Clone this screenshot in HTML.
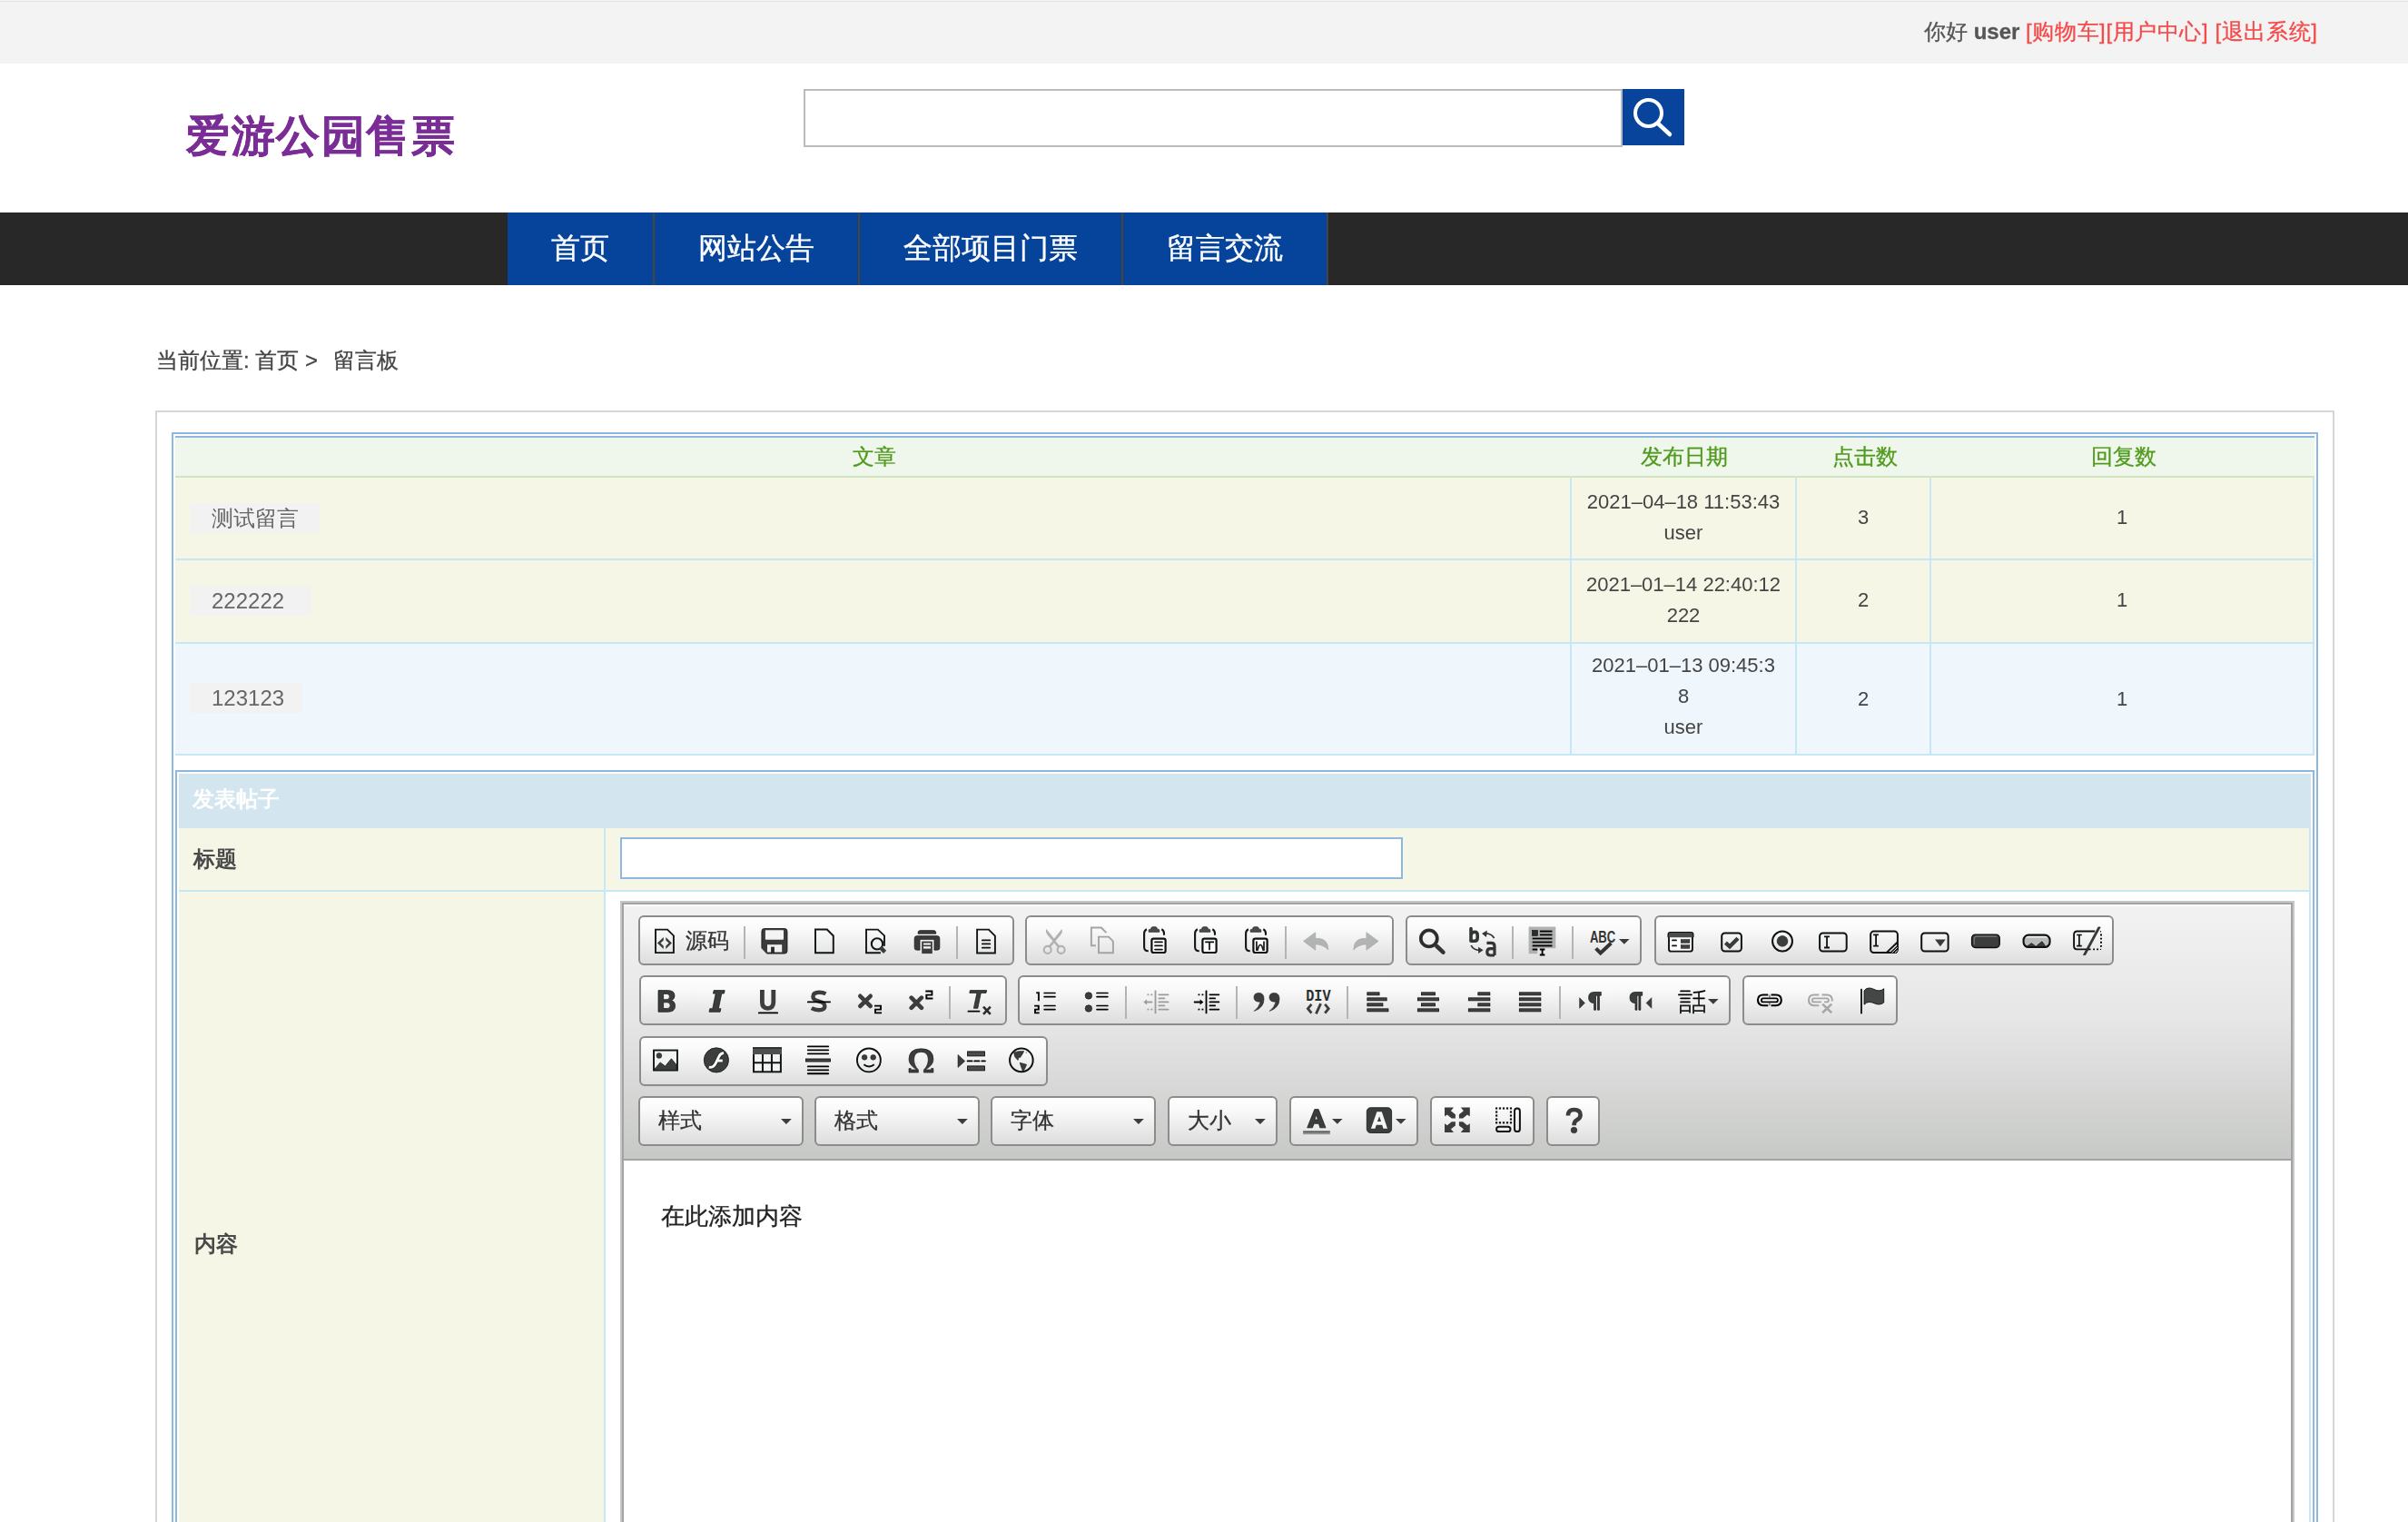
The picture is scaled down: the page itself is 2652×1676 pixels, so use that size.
<!DOCTYPE html>
<html><head><meta charset="utf-8">
<style>
*{margin:0;padding:0;box-sizing:border-box}
html,body{width:2652px;height:1676px;overflow:hidden;background:#fff;font-family:"Liberation Sans",sans-serif}
.a{position:absolute}
.t{position:absolute;white-space:nowrap;line-height:1;will-change:transform}
.cj{-webkit-text-stroke:0.3px currentColor}
#top{left:0;top:0;width:2652px;height:70px;background:#f3f3f3;border-top:2px solid #f3f3f3}
#top:before{content:"";position:absolute;left:0;top:-1px;width:100%;height:1px;background:#e3e3e3}
#nav{left:0;top:234px;width:2652px;height:80px;background:#282828}
.ni{will-change:transform;-webkit-text-stroke:0.35px #fff;position:absolute;top:0;height:80px;background:#06449b;border-right:2px solid #4b4538;color:#fff;font-size:32px;line-height:78px;text-align:center}
.box{left:171px;top:452px;width:2400px;height:1300px;border:2px solid #d6d6d6}
.lb{will-change:transform;position:absolute;background:#f2f2f2;color:#666;font-size:24px;line-height:33px;height:33px;padding-left:24px}
.hd{color:#4f9a1c;font-size:24px}
.dt{color:#444;font-size:22px;text-align:center;line-height:34px}
.grp{position:absolute;border:2px solid #8c8c8c;border-radius:6px;background:linear-gradient(#fefefe,#fafafa 25%,#dddddd)}
.sep{position:absolute;width:2px;background:#b4b4b4}
.ic{position:absolute;overflow:visible}
</style></head><body>
<div id="top" class="a"></div>
<div class="t cj" style="left:2119px;top:23px;font-size:24px;color:#555">你好 <b>user</b> <span style="color:#f44a4a;letter-spacing:0.6px">[购物车][用户中心] [退出系统]</span></div>

<div class="t" style="left:205px;top:126px;font-size:48px;font-weight:bold;color:#7a2d96;letter-spacing:1.6px;-webkit-text-stroke:0.3px #7a2d96">爱游公园售票</div>
<div class="a" style="left:885px;top:98px;width:902px;height:64px;border:2px solid #bbb;background:#fff"></div>
<div class="a" style="left:1787px;top:98px;width:68px;height:62px;background:#08449b">
<svg width="68" height="62" viewBox="0 0 68 62"><circle cx="28.5" cy="26.5" r="14.5" fill="none" stroke="#fff" stroke-width="4"/><line x1="39" y1="38" x2="52" y2="50" stroke="#fff" stroke-width="4.5" stroke-linecap="round"/></svg>
</div>

<div id="nav" class="a">
<div class="ni" style="left:559px;width:162px">首页</div>
<div class="ni" style="left:721px;width:226px">网站公告</div>
<div class="ni" style="left:947px;width:290px">全部项目门票</div>
<div class="ni" style="left:1237px;width:226px;border-right-color:#444">留言交流</div>
</div>

<div class="t cj" style="left:172px;top:385px;font-size:24px;color:#444">当前位置: 首页 &gt;&nbsp;<span style="margin-left:10px">留言板</span></div>

<div class="a box"></div>
<!-- listing table -->
<div class="a" style="left:189px;top:476px;width:2364px;height:1300px;border:2px solid #8db8e0"></div>
<div class="a" style="left:193px;top:480px;width:2356px;height:2px;background:#8db8e0"></div>
<div class="a" style="left:193px;top:482px;width:2356px;height:42px;background:#eff6eb"></div>
<div class="a" style="left:193px;top:524px;width:2356px;height:2px;background:#d0e6c2"></div>
<div class="t hd cj" style="left:939px;top:491px">文章</div>
<div class="t hd cj" style="left:1807px;top:491px">发布日期</div>
<div class="t hd cj" style="left:2018px;top:491px">点击数</div>
<div class="t hd cj" style="left:2303px;top:491px">回复数</div>

<div class="a" style="left:193px;top:526px;width:2356px;height:89px;background:#f6f6e6"></div>
<div class="a" style="left:193px;top:615px;width:2356px;height:2px;background:#c6e7f4"></div>
<div class="a" style="left:193px;top:617px;width:2356px;height:90px;background:#f6f6e6"></div>
<div class="a" style="left:193px;top:707px;width:2356px;height:2px;background:#c6e7f4"></div>
<div class="a" style="left:193px;top:709px;width:2356px;height:121px;background:#f0f7fc"></div>
<div class="a" style="left:193px;top:830px;width:2356px;height:2px;background:#c6e7f4"></div>
<div class="a" style="left:1729px;top:526px;width:2px;height:304px;background:#c6e7f4"></div>
<div class="a" style="left:1977px;top:526px;width:2px;height:304px;background:#c6e7f4"></div>
<div class="a" style="left:2125px;top:526px;width:2px;height:304px;background:#c6e7f4"></div>
<div class="a" style="left:2547px;top:526px;width:2px;height:304px;background:#c6e7f4"></div>

<div class="lb" style="left:209px;top:554px;width:143px">测试留言</div>
<div class="lb" style="left:209px;top:645px;width:134px">222222</div>
<div class="lb" style="left:209px;top:752px;width:124px">123123</div>

<div class="t dt" style="left:1731px;top:535.5px;width:246px">2021–04–18 11:53:43<br>user</div>
<div class="t dt" style="left:1731px;top:626.5px;width:246px">2021–01–14 22:40:12<br>222</div>
<div class="t dt" style="left:1731px;top:716px;width:246px">2021–01–13 09:45:3<br>8<br>user</div>
<div class="t dt" style="left:1979px;top:553px;width:146px">3</div>
<div class="t dt" style="left:1979px;top:644px;width:146px">2</div>
<div class="t dt" style="left:1979px;top:753px;width:146px">2</div>
<div class="t dt" style="left:2127px;top:553px;width:420px">1</div>
<div class="t dt" style="left:2127px;top:644px;width:420px">1</div>
<div class="t dt" style="left:2127px;top:753px;width:420px">1</div>

<!-- form table -->
<div class="a" style="left:193px;top:848px;width:2356px;height:1000px;border:2px solid #8db8e0"></div>
<div class="a" style="left:197px;top:852px;width:2348px;height:60px;background:#d3e6f0"></div>
<div class="t" style="left:212px;top:868px;font-size:24px;font-weight:bold;color:#fff">发表帖子</div>
<div class="a" style="left:197px;top:912px;width:2348px;height:68px;background:#f6f6e6"></div>
<div class="a" style="left:197px;top:980px;width:2348px;height:2px;background:#c6e7f4"></div>
<div class="a" style="left:197px;top:982px;width:468px;height:800px;background:#f6f6e6"></div>
<div class="a" style="left:665px;top:912px;width:2px;height:900px;background:#c6e7f4"></div>
<div class="a" style="left:2543px;top:912px;width:2px;height:900px;background:#c6e7f4"></div>
<div class="t" style="left:213px;top:934px;font-size:24px;font-weight:bold;color:#4a4a4a">标题</div>
<div class="t" style="left:214px;top:1358px;font-size:24px;font-weight:bold;color:#4a4a4a">内容</div>
<div class="a" style="left:683px;top:922px;width:862px;height:46px;border:2px solid #8fb8e0;background:#fff"></div>

<!-- editor -->
<div id="ed" class="a" style="left:683px;top:992px;width:1844px;height:700px;border:2px solid #c6c6c6">
 <div class="a" style="left:0;top:0;width:1840px;height:696px;border:2px solid #a3a3a3;background:#fff"></div>
 <div class="a" style="left:2px;top:2px;width:1836px;height:280px;background:linear-gradient(#f2f2f2,#e6e6e6 45%,#c7c9c6);border-top:2px solid #fdfdfd"></div>
 <div class="a" style="left:2px;top:282px;width:1836px;height:2px;background:#a3a3a3"></div>
</div>
<div class="grp" style="left:703px;top:1008px;width:414px;height:55px"></div>
<svg class="ic" style="left:716.0px;top:1019.5px" width="32" height="32" viewBox="0 0 32 32"><path d="M6 3.6H19L25.9 10.4V29.1H6Z" fill="none" stroke="#111616" stroke-width="1.9"/><path d="M7.9 18.6L14.8 12V15.5L11.5 18.6L14.8 21.8V25.1Z M23.9 18.6L17.3 12V15.5L20.6 18.6L17.3 21.8V25.1Z" fill="#3a3b3b"/></svg>
<div class="t cj" style="left:755px;top:1024px;font-size:24px;color:#333">源码</div>
<div class="sep" style="left:819px;top:1020px;height:36px"></div>
<svg class="ic" style="left:837.0px;top:1019.5px" width="32" height="32" viewBox="0 0 32 32"><path d="M5 2.5H27Q30 2.5 30 5.5V27.1Q30 30.1 27 30.1H7.6L1.9 24.1V5.5Q1.9 2.5 5 2.5Z" fill="#3a3b3b"/><path d="M5 2.5H27Q30 2.5 30 5.5V27.1Q30 30.1 27 30.1H7.6L1.9 24.1V5.5Q1.9 2.5 5 2.5Z" fill="none" stroke="#111" stroke-width="0.8"/><rect x="5.9" y="4.2" width="20.1" height="10.6" rx="0.8" fill="#f4f4f4"/><rect x="8" y="20.2" width="16.2" height="8.3" fill="#f0f0f0"/><rect x="12.1" y="22.7" width="3.8" height="7" fill="#2a2b2b"/></svg>
<svg class="ic" style="left:892.0px;top:1019.5px" width="32" height="32" viewBox="0 0 32 32"><path d="M6 3.5H18.8L25.8 10.5V29.2H6Z" fill="none" stroke="#111616" stroke-width="1.95"/></svg>
<svg class="ic" style="left:948.0px;top:1019.5px" width="32" height="32" viewBox="0 0 32 32"><path d="M26 21.8V10.4L18.8 3.6H6V29.2H21.9" fill="none" stroke="#111616" stroke-width="1.9"/><circle cx="18" cy="19.4" r="7.2" fill="#f0f0f0"/><circle cx="18" cy="19.4" r="6.15" fill="none" stroke="#111616" stroke-width="2.1"/><path d="M21.6 23.3L26.6 28.4" stroke="#3a3b3b" stroke-width="4.4"/></svg>
<svg class="ic" style="left:1005.0px;top:1019.5px" width="32" height="32" viewBox="0 0 32 32"><path d="M6 8.3V7.2Q6 4.6 8.6 4.6H23.2Q25.8 4.6 25.8 7.2V8.3Z" fill="#3a3b3b" stroke="#111" stroke-width="0.6"/><path d="M5 10.6H27Q29.9 10.6 29.9 13.5V23.6Q29.9 26.2 27.3 26.2H23.9V14.4H8.1V26.2H4.7Q2.1 26.2 2.1 23.6V13.5Q2.1 10.6 5 10.6Z" fill="#3a3b3b" stroke="#111" stroke-width="0.6"/><rect x="10.2" y="16.6" width="11.6" height="13.5" fill="#3a3b3b"/><rect x="12" y="18.5" width="8" height="2" fill="#f4f4f4"/><rect x="12" y="22.2" width="8" height="2.4" fill="#f4f4f4"/></svg>
<div class="sep" style="left:1053px;top:1020px;height:36px"></div>
<svg class="ic" style="left:1070.0px;top:1019.5px" width="32" height="32" viewBox="0 0 32 32"><path d="M6.1 3.6H18.9L25.9 10.6V29.5H6.1Z" fill="none" stroke="#111616" stroke-width="1.9"/><path d="M11.8 15.45H20.3 M11.8 19.45H20.3 M11.8 23.55H20.3" stroke="#111" stroke-width="1.7" stroke-linecap="round"/></svg>
<div class="grp" style="left:1129px;top:1008px;width:406px;height:55px"></div>
<svg class="ic" style="left:1145.0px;top:1019.5px" width="32" height="32" viewBox="0 0 32 32"><path d="M7.4 3Q5.8 6 9 10L14.6 16.6H17.2L22.8 10Q26 6 24.4 3L15.9 13.4Z" fill="#b0b2b2"/><path d="M10.6 22.6L15.9 16.4L21.2 22.6" fill="none" stroke="#b0b2b2" stroke-width="2.6"/><circle cx="8.7" cy="25.9" r="4" fill="none" stroke="#b0b2b2" stroke-width="2.1"/><circle cx="23.6" cy="25.9" r="4" fill="none" stroke="#b0b2b2" stroke-width="2.1"/></svg>
<svg class="ic" style="left:1198.0px;top:1019.5px" width="32" height="32" viewBox="0 0 32 32"><path d="M8.8 21.2H3.9V1.5H14.9L20.4 7.2 M12 29.2V11.6H23L27.9 16.6V29.2Z" fill="none" stroke="#a2a4a4" stroke-width="1.9"/></svg>
<svg class="ic" style="left:1256.0px;top:1019.5px" width="32" height="32" viewBox="0 0 32 32"><path d="M6.9 3.3Q4.1 4.5 4.1 8V23Q4.1 27.3 8.8 27.3 M23.3 3.3Q26 4.5 26 8V9.8" fill="none" stroke="#111616" stroke-width="2.1"/><path d="M9.2 6.3V4.2Q9.2 3.4 10.2 3.4H11.3L12.2 1.3Q12.5 0.7 13.3 0.7H16.7Q17.5 0.7 17.8 1.3L18.7 3.4H19.8Q20.8 3.4 20.8 4.2V6.3Z" fill="#4a4b4b" stroke="#1a1a1a" stroke-width="0.7"/><rect x="12.4" y="13.6" width="15.2" height="15.4" rx="2" fill="#fff" stroke="#0d1111" stroke-width="2.2"/><path d="M16 17.45H24 M16 21.4H24 M16 25.55H24" stroke="#111" stroke-width="1.7" stroke-linecap="round"/></svg>
<svg class="ic" style="left:1312.0px;top:1019.5px" width="32" height="32" viewBox="0 0 32 32"><path d="M6.9 3.3Q4.1 4.5 4.1 8V23Q4.1 27.3 8.8 27.3 M23.3 3.3Q26 4.5 26 8V9.8" fill="none" stroke="#111616" stroke-width="2.1"/><path d="M9.2 6.3V4.2Q9.2 3.4 10.2 3.4H11.3L12.2 1.3Q12.5 0.7 13.3 0.7H16.7Q17.5 0.7 17.8 1.3L18.7 3.4H19.8Q20.8 3.4 20.8 4.2V6.3Z" fill="#4a4b4b" stroke="#1a1a1a" stroke-width="0.7"/><rect x="12.4" y="13.6" width="15.2" height="15.4" rx="2" fill="#fff" stroke="#0d1111" stroke-width="2.2"/><path d="M15.2 17.45H25 M20 17.45V26.2" stroke="#111" stroke-width="1.7"/></svg>
<svg class="ic" style="left:1368.0px;top:1019.5px" width="32" height="32" viewBox="0 0 32 32"><path d="M6.9 3.3Q4.1 4.5 4.1 8V23Q4.1 27.3 8.8 27.3 M23.3 3.3Q26 4.5 26 8V9.8" fill="none" stroke="#111616" stroke-width="2.1"/><path d="M9.2 6.3V4.2Q9.2 3.4 10.2 3.4H11.3L12.2 1.3Q12.5 0.7 13.3 0.7H16.7Q17.5 0.7 17.8 1.3L18.7 3.4H19.8Q20.8 3.4 20.8 4.2V6.3Z" fill="#4a4b4b" stroke="#1a1a1a" stroke-width="0.7"/><rect x="12.4" y="13.6" width="15.2" height="15.4" rx="2" fill="#fff" stroke="#0d1111" stroke-width="2.2"/><path d="M15.9 16.6V26.2H17Q18.5 20.4 20.1 20.4Q21.7 20.4 23.2 26.2H24V16.6" fill="none" stroke="#222" stroke-width="1.8"/></svg>
<div class="sep" style="left:1415px;top:1020px;height:36px"></div>
<svg class="ic" style="left:1433.0px;top:1019.5px" width="32" height="32" viewBox="0 0 32 32"><path d="M2.6 16.4L15.7 6.7V13.5H19.4Q29.5 14 29.8 26Q25 20.5 16.5 19.8H15.7V26.2Z" fill="#b2b4b4" stroke="#a0a2a2" stroke-width="0.6"/></svg>
<svg class="ic" style="left:1489.0px;top:1019.5px" width="32" height="32" viewBox="0 0 32 32"><path d="M29 16.4L15.9 6.7V13.5H12.2Q2.1 14 1.8 26Q6.6 20.5 15.1 19.8H15.9V26.2Z" fill="#b2b4b4" stroke="#a0a2a2" stroke-width="0.6"/></svg>
<div class="grp" style="left:1548px;top:1008px;width:260px;height:55px"></div>
<svg class="ic" style="left:1561.0px;top:1019.5px" width="32" height="32" viewBox="0 0 32 32"><circle cx="12.8" cy="13.4" r="9" fill="none" stroke="#333434" stroke-width="3.8"/><circle cx="12.8" cy="13.4" r="9" fill="none" stroke="#111" stroke-width="0.5"/><path d="M21.4 22L28.4 28.6" stroke="#333434" stroke-width="4.6" stroke-linecap="round"/></svg>
<svg class="ic" style="left:1617.0px;top:1019.5px" width="32" height="32" viewBox="0 0 32 32"><path d="M3 2.5V16.2 M3 9.6Q3.6 6.3 7.4 6.3Q10.2 6.3 10.2 10V12.4Q10.2 16.2 7 16.2H3" fill="none" stroke="#333434" stroke-width="3.6" stroke-linecap="round"/><path d="M20.4 18.4H25.4Q29 18.4 29 22.2V32 M29 24.6H24.4Q20.8 24.6 20.8 28.2Q20.8 32 24.4 32H29" fill="none" stroke="#333434" stroke-width="3.2"/><path d="M28.5 13.1Q26.5 8.3 18.5 7.6" fill="none" stroke="#333434" stroke-width="1.8"/><path d="M15 7.9L20.9 4.6L20 12.1Z" fill="#333434"/><path d="M3.2 21Q5.5 26.2 12.5 26.4" fill="none" stroke="#333434" stroke-width="1.8"/><path d="M16.5 26.2L11.1 22.7V30.1Z" fill="#333434"/></svg>
<div class="sep" style="left:1665px;top:1020px;height:36px"></div>
<svg class="ic" style="left:1681.5px;top:1019.5px" width="32" height="32" viewBox="0 0 32 32"><path d="M1.6 0.6H31.3V24.3H11.3V30.2H1.6Z" fill="#b0b2b2"/><rect x="5.65" y="4.6" width="5.65" height="5.7" fill="#2a2b2b" stroke="#000" stroke-width="0.6"/><rect x="13.8" y="4.6" width="13.7" height="1.9" fill="#000"/><rect x="13.8" y="8.5" width="13.7" height="1.8" fill="#000"/><rect x="5.65" y="12.6" width="21.85" height="1.8" fill="#000"/><rect x="5.65" y="16.6" width="21.85" height="1.8" fill="#000"/><rect x="5.65" y="20.5" width="21.85" height="1.9" fill="#000"/><rect x="5.65" y="24.6" width="5.65" height="1.9" fill="#000"/><path d="M13.8 25.5H19.4 M16.6 25.5V31.5 M13.8 31.5H19.4" stroke="#000" stroke-width="1.9"/></svg>
<div class="sep" style="left:1731px;top:1020px;height:36px"></div>
<svg class="ic" style="left:1748.0px;top:1019.5px" width="32" height="32" viewBox="0 0 32 32"><text x="2.9" y="18.4" font-family="Liberation Sans" font-weight="bold" font-size="18.9" fill="#333434" textLength="28.3" lengthAdjust="spacingAndGlyphs">ABC</text><path d="M9.6 24.3L14.7 29.4L26.4 18.5" fill="none" stroke="#333434" stroke-width="4"/></svg>
<svg class="ic" style="left:1783.0px;top:1034.1px" width="11.6" height="5.8" viewBox="0 0 11.6 5.8"><path d="M0 0H11.6L5.8 5.8Z" fill="#3c3c3c"/></svg>
<div class="grp" style="left:1822px;top:1008px;width:506px;height:55px"></div>
<svg class="ic" style="left:1835.0px;top:1019.5px" width="32" height="32" viewBox="0 0 32 32"><rect x="3" y="7.4" width="25.9" height="20.2" rx="2.4" fill="#fff" stroke="#0d1111" stroke-width="1.9"/><path d="M2.1 12.3V9Q2.1 6.5 4.6 6.5H27.4Q29.9 6.5 29.9 9V12.3Z" fill="#4a4b4b"/><path d="M2.1 12.3V9Q2.1 6.5 4.6 6.5H27.4Q29.9 6.5 29.9 9V12.3" fill="none" stroke="#0d1111" stroke-width="1.2"/><path d="M6.9 15.4H11.1 M6.9 21.4H11.1" stroke="#111" stroke-width="1.7" stroke-linecap="round"/><rect x="16.2" y="14.6" width="9.7" height="3.7" fill="#3f4040" stroke="#111" stroke-width="0.5"/><rect x="16.2" y="20.6" width="9.7" height="3.7" fill="#3f4040" stroke="#111" stroke-width="0.5"/></svg>
<svg class="ic" style="left:1891.0px;top:1019.5px" width="32" height="32" viewBox="0 0 32 32"><rect x="5.2" y="7.5" width="21.7" height="20" rx="3.5" fill="none" stroke="#0d1111" stroke-width="2"/><path d="M9.4 18.1L14 22.3L23 13.3" fill="none" stroke="#3a3b3b" stroke-width="4.4"/></svg>
<svg class="ic" style="left:1947.0px;top:1019.5px" width="32" height="32" viewBox="0 0 32 32"><circle cx="16" cy="16.45" r="10.95" fill="none" stroke="#0d1111" stroke-width="2"/><circle cx="16" cy="16.4" r="5.9" fill="#3c3d3d" stroke="#111" stroke-width="0.5"/></svg>
<svg class="ic" style="left:2003.0px;top:1019.5px" width="32" height="32" viewBox="0 0 32 32"><rect x="1.1" y="7.5" width="29.6" height="20" rx="3.5" fill="none" stroke="#0d1111" stroke-width="2"/><path d="M6 11.45H12 M9.05 11.45V23.5 M6 23.5H12" stroke="#0d1111" stroke-width="1.8"/></svg>
<svg class="ic" style="left:2059.0px;top:1019.5px" width="32" height="32" viewBox="0 0 32 32"><rect x="1.15" y="5.6" width="29.75" height="23.5" rx="3.5" fill="none" stroke="#0d1111" stroke-width="2"/><path d="M4.1 9.35H9.9 M7.1 9.35V21.6 M4.1 21.6H9.9" stroke="#0d1111" stroke-width="1.8"/><path d="M18.6 29.1L30.5 17.7" stroke="#111" stroke-width="2"/><path d="M21.6 29.6L31.2 20.4V26.2Q31.2 30.1 27.4 30.1H21.2Z" fill="#111"/><path d="M24.6 29.2L30.6 23.4 M27.8 29.4L30.8 26.6" stroke="#f2f2f2" stroke-width="1"/></svg>
<svg class="ic" style="left:2115.0px;top:1019.5px" width="32" height="32" viewBox="0 0 32 32"><rect x="1.2" y="7.5" width="29.4" height="20" rx="3.5" fill="none" stroke="#0d1111" stroke-width="2"/><path d="M16 14.6H27.8L21.9 22.2Z" fill="#3a3b3b"/></svg>
<svg class="ic" style="left:2171.0px;top:1019.5px" width="32" height="32" viewBox="0 0 32 32"><rect x="0.6" y="9.1" width="30.6" height="14.4" rx="4" fill="#3c3d3d" stroke="#0d0d0d" stroke-width="1.4"/><path d="M3.2 20.2V14.2Q3.2 11.2 6.4 11.2H28.2" fill="none" stroke="#7a7b7b" stroke-width="1.2"/></svg>
<svg class="ic" style="left:2227.0px;top:1019.5px" width="32" height="32" viewBox="0 0 32 32"><rect x="1.6" y="9.6" width="28.9" height="13.4" rx="5.5" fill="#f4f4f4"/><path d="M2.8 12.5H29.4V18Q29.4 21.8 25.6 21.8H6.6Q2.8 21.8 2.8 18Z" fill="#b9baba"/><path d="M4.9 22.5L10.3 18.7L15.2 22.2L21.9 16.8L26 22.5Z" fill="#3a3b3b" stroke="#111" stroke-width="0.8"/><rect x="1.6" y="9.6" width="28.9" height="13.4" rx="5.5" fill="none" stroke="#0d1111" stroke-width="2.2"/></svg>
<svg class="ic" style="left:2283.0px;top:1019.5px" width="32" height="32" viewBox="0 0 32 32"><path d="M24.2 5.5H4.6Q1.1 5.5 1.1 9V21.8Q1.1 25.4 4.6 25.4H19.6" fill="none" stroke="#0d1111" stroke-width="1.9"/><path d="M4.15 9.5H9.8 M6.9 9.5V21.6 M4.15 21.6H9.8" stroke="#0d1111" stroke-width="1.7"/><path d="M27.8 0.9H30.2L13.8 31.6H11.4Z" fill="#3a3b3b" stroke="#111" stroke-width="0.6"/><path d="M31 8.6V24" stroke="#000" stroke-width="1.9" stroke-dasharray="1.9 2.2"/><path d="M22.2 25.45H29.5" stroke="#000" stroke-width="1.8" stroke-dasharray="1.8 2.2"/><circle cx="30.5" cy="5.8" r="0.7" fill="#000"/><circle cx="30.5" cy="25.4" r="0.7" fill="#000"/></svg>
<div class="grp" style="left:704px;top:1074px;width:405px;height:55px"></div>
<svg class="ic" style="left:718.4px;top:1085.5px" width="32" height="32" viewBox="0 0 32 32"><path fill-rule="evenodd" d="M7 4.6H17.3Q25 4.6 25 10.6Q25 14.1 21.6 15.6Q25.6 17.2 25.6 21.6Q25.6 28.3 17.5 28.3H7Z M12.6 8.4H16.3Q19.4 8.4 19.4 11.4Q19.4 14.7 16 14.7H12.6Z M12.6 17.8H16.6Q20.2 17.8 20.2 21.2Q20.2 24.6 16.6 24.6H12.6Z" fill="#3c3d3d" stroke="#111616" stroke-width="0.7"/></svg>
<svg class="ic" style="left:773.6px;top:1085.5px" width="32" height="32" viewBox="0 0 32 32"><path d="M12.2 4.6H24.2L23.4 8.1H20.8L17.3 24.7H19.9L19.1 28.3H7L7.8 24.7H10.8L14.2 8.1H11.4Z" fill="#3c3d3d" stroke="#111616" stroke-width="0.7"/></svg>
<svg class="ic" style="left:830.0px;top:1085.5px" width="32" height="32" viewBox="0 0 32 32"><path d="M9.4 4.6V17.6Q9.4 24.4 15.6 24.4Q21.8 24.4 21.8 17.6V4.6" fill="none" stroke="#3c3d3d" stroke-width="4.8"/><path d="M7 4.6H11.8 M19.4 4.6H24.2" stroke="#111616" stroke-width="0.8"/><rect x="5" y="28.5" width="22" height="1.8" rx="0.6" fill="#000"/></svg>
<svg class="ic" style="left:886.0px;top:1085.5px" width="32" height="32" viewBox="0 0 32 32"><path d="M23.4 8.4Q20.6 6.8 16.2 6.8Q9.4 6.8 9.4 11.6Q9.4 15.2 15.8 16.6Q22.4 18 22.4 22Q22.4 26.2 15.6 26.2Q11.2 26.2 7.8 24.2" fill="none" stroke="#3c3d3d" stroke-width="4.4"/><rect x="3" y="16.4" width="25.9" height="1.9" rx="0.5" fill="#000"/></svg>
<svg class="ic" style="left:942.0px;top:1085.5px" width="32" height="32" viewBox="0 0 32 32"><path d="M5.3 10.8L16.7 22 M16.7 10.8L5.3 22" stroke="#3c3d3d" stroke-width="4.6" stroke-linecap="round"/><path d="M21 21.65H28V25.6H22V29.4H29" fill="none" stroke="#000" stroke-width="1.9"/></svg>
<svg class="ic" style="left:997.6px;top:1085.5px" width="32" height="32" viewBox="0 0 32 32"><path d="M5.7 12.7L16.9 23.9 M16.9 12.7L5.7 23.9" stroke="#3c3d3d" stroke-width="4.6" stroke-linecap="round"/><path d="M21.3 5.55H28.4V9.6H22.3V13.45H29.4" fill="none" stroke="#000" stroke-width="1.9"/></svg>
<div class="sep" style="left:1045px;top:1086px;height:36px"></div>
<svg class="ic" style="left:1062.5px;top:1085.5px" width="32" height="32" viewBox="0 0 32 32"><path d="M5.4 4.6H23.7L23 7.4H17.3L13.8 24.3H9.4L12.9 7.4H4.8Z" fill="#3c3d3d" stroke="#111616" stroke-width="0.7"/><rect x="2.6" y="26.7" width="13.7" height="1.8" rx="0.6" fill="#000"/><path d="M20 22.6L27.8 30.9 M27.8 22.6L20 30.9" stroke="#2a2b2b" stroke-width="2.6"/></svg>
<div class="grp" style="left:1121px;top:1074px;width:785px;height:55px"></div>
<svg class="ic" style="left:1135.0px;top:1085.5px" width="32" height="32" viewBox="0 0 32 32"><path d="M6.2 7.2H8.95V16.2" fill="none" stroke="#111616" stroke-width="2"/><path d="M4.1 21.65H8.8V25.6H5V29.4H9.7" fill="none" stroke="#000" stroke-width="1.9"/><path d="M15.1 7.5H27 M15.1 11.55H27 M15.1 21.5H27 M15.1 25.55H27" stroke="#000" stroke-width="1.7" stroke-linecap="round"/></svg>
<svg class="ic" style="left:1192.0px;top:1085.5px" width="32" height="32" viewBox="0 0 32 32"><circle cx="6.9" cy="10.4" r="3.74" fill="#3c3d3d" stroke="#111616" stroke-width="0.6"/><circle cx="6.9" cy="24.5" r="3.74" fill="#3c3d3d" stroke="#111616" stroke-width="0.6"/><path d="M16 7.5H27.9 M16 11.55H27.9 M16 21.5H27.9 M16 25.55H27.9" stroke="#000" stroke-width="1.7" stroke-linecap="round"/></svg>
<div class="sep" style="left:1239px;top:1086px;height:36px"></div>
<svg class="ic" style="left:1256.6px;top:1085.5px" width="32" height="32" viewBox="0 0 32 32"><rect x="14.6" y="4.6" width="1.8" height="25.7" rx="0.6" fill="#9a9c9c"/><path d="M19.3 9.35H29.599999999999998" stroke="#9a9c9c" stroke-width="1.7" stroke-linecap="round"/><path d="M19.3 13.4H25.4" stroke="#9a9c9c" stroke-width="1.7" stroke-linecap="round"/><path d="M19.3 17.45H29.599999999999998" stroke="#9a9c9c" stroke-width="1.7" stroke-linecap="round"/><path d="M19.3 21.4H25.4" stroke="#9a9c9c" stroke-width="1.7" stroke-linecap="round"/><path d="M19.3 25.55H29.599999999999998" stroke="#9a9c9c" stroke-width="1.7" stroke-linecap="round"/><rect x="6.5" y="8.5" width="1.9" height="1.7" fill="#9a9c9c"/><rect x="6.5" y="24.7" width="1.9" height="1.7" fill="#9a9c9c"/><rect x="10.4" y="8.5" width="1.9" height="1.7" fill="#9a9c9c"/><rect x="10.4" y="24.7" width="1.9" height="1.7" fill="#9a9c9c"/><path d="M6 17.5H12.3" stroke="#9a9c9c" stroke-width="1.8"/><path d="M2.3 17.5L6.1 14.6V20.4Z" fill="#9a9c9c"/></svg>
<svg class="ic" style="left:1313.6px;top:1085.5px" width="32" height="32" viewBox="0 0 32 32"><rect x="13.6" y="4.6" width="1.8" height="25.7" rx="0.6" fill="#000"/><path d="M18.400000000000002 9.35H28.4" stroke="#000" stroke-width="1.7" stroke-linecap="round"/><path d="M18.400000000000002 13.4H24.2" stroke="#000" stroke-width="1.7" stroke-linecap="round"/><path d="M18.400000000000002 17.45H28.4" stroke="#000" stroke-width="1.7" stroke-linecap="round"/><path d="M18.400000000000002 21.4H24.2" stroke="#000" stroke-width="1.7" stroke-linecap="round"/><path d="M18.400000000000002 25.55H28.4" stroke="#000" stroke-width="1.7" stroke-linecap="round"/><rect x="5.5" y="8.5" width="1.9" height="1.7" fill="#000"/><rect x="5.5" y="24.7" width="1.9" height="1.7" fill="#000"/><rect x="9.5" y="8.5" width="1.9" height="1.7" fill="#000"/><rect x="9.5" y="24.7" width="1.9" height="1.7" fill="#000"/><path d="M1.6 17.5H8" stroke="#000" stroke-width="1.8" stroke-linecap="round"/><path d="M11.4 17.5L7.6 14.6V20.4Z" fill="#000"/></svg>
<div class="sep" style="left:1361px;top:1086px;height:36px"></div>
<svg class="ic" style="left:1379.0px;top:1085.5px" width="32" height="32" viewBox="0 0 32 32"><path d="M7.5 7.5Q13 7.5 13 14Q13 23.8 2.2 27.4Q7.6 23.6 9.2 17.1Q2 17.6 2 12.3Q2 7.5 7.5 7.5Z" fill="#3c3d3d" stroke="#111616" stroke-width="0.6"/><path d="M24.5 7.5Q30 7.5 30 14Q30 23.8 19.2 27.4Q24.6 23.6 26.2 17.1Q19 17.6 19 12.3Q19 7.5 24.5 7.5Z" fill="#3c3d3d" stroke="#111616" stroke-width="0.6"/></svg>
<svg class="ic" style="left:1435.7px;top:1085.5px" width="32" height="32" viewBox="0 0 32 32"><text x="2.2" y="16.2" font-family="Liberation Mono" font-weight="bold" font-size="19" fill="#2a2d2d" textLength="27.4" lengthAdjust="spacingAndGlyphs">DIV</text><path d="M8.4 19.8L4.4 24.7L8.4 29.6 M23.2 19.8L27.2 24.7L23.2 29.6" fill="none" stroke="#3c3d3d" stroke-width="2.8"/><path d="M18.6 19.1L13.4 30.3" stroke="#3c3d3d" stroke-width="2.8"/></svg>
<div class="sep" style="left:1483px;top:1086px;height:36px"></div>
<svg class="ic" style="left:1501.5px;top:1085.5px" width="32" height="32" viewBox="0 0 32 32"><rect x="3.85" y="6.85" width="13.2" height="3.0" fill="#444" stroke="#0d0d0d" stroke-width="0.8"/><rect x="3.85" y="12.85" width="21.3" height="3.0" fill="#444" stroke="#0d0d0d" stroke-width="0.8"/><rect x="3.85" y="18.85" width="17.1" height="3.0" fill="#444" stroke="#0d0d0d" stroke-width="0.8"/><rect x="3.85" y="24.85" width="23.1" height="3.0" fill="#444" stroke="#0d0d0d" stroke-width="0.8"/></svg>
<svg class="ic" style="left:1557.0px;top:1085.5px" width="32" height="32" viewBox="0 0 32 32"><rect x="8.549999999999999" y="6.85" width="14.900000000000002" height="3.0" fill="#444" stroke="#0d0d0d" stroke-width="0.8"/><rect x="4.35" y="12.85" width="23.2" height="3.0" fill="#444" stroke="#0d0d0d" stroke-width="0.8"/><rect x="8.549999999999999" y="18.85" width="14.900000000000002" height="3.0" fill="#444" stroke="#0d0d0d" stroke-width="0.8"/><rect x="4.35" y="24.85" width="23.2" height="3.0" fill="#444" stroke="#0d0d0d" stroke-width="0.8"/></svg>
<svg class="ic" style="left:1613.0px;top:1085.5px" width="32" height="32" viewBox="0 0 32 32"><rect x="14.85" y="6.85" width="13.0" height="3.0" fill="#444" stroke="#0d0d0d" stroke-width="0.8"/><rect x="4.35" y="12.85" width="23.5" height="3.0" fill="#444" stroke="#0d0d0d" stroke-width="0.8"/><rect x="14.85" y="18.85" width="13.0" height="3.0" fill="#444" stroke="#0d0d0d" stroke-width="0.8"/><rect x="4.35" y="24.85" width="23.5" height="3.0" fill="#444" stroke="#0d0d0d" stroke-width="0.8"/></svg>
<svg class="ic" style="left:1669.0px;top:1085.5px" width="32" height="32" viewBox="0 0 32 32"><rect x="4.35" y="6.85" width="23.5" height="3.0" fill="#444" stroke="#0d0d0d" stroke-width="0.8"/><rect x="4.35" y="12.85" width="23.5" height="3.0" fill="#444" stroke="#0d0d0d" stroke-width="0.8"/><rect x="4.35" y="18.85" width="23.5" height="3.0" fill="#444" stroke="#0d0d0d" stroke-width="0.8"/><rect x="4.35" y="24.85" width="23.5" height="3.0" fill="#444" stroke="#0d0d0d" stroke-width="0.8"/></svg>
<div class="sep" style="left:1717px;top:1086px;height:36px"></div>
<svg class="ic" style="left:1734.5px;top:1085.5px" width="32" height="32" viewBox="0 0 32 32"><path d="M4.6 12.7L10.4 18.5L4.6 24.3Z" fill="#3c3d3d" stroke="#111616" stroke-width="0.5"/><path d="M28.3 6.5H20.6Q14.6 6.5 14.6 12.5Q14.6 18.5 20.6 18.5V26.2 M21.55 6.5V26.2 M25.45 6.5V26.2" fill="none" stroke="#000" stroke-width="0"/><path d="M20.6 6.5H28.3V10.2H26.4V26.2H24.5V10.2H22.5V26.2H20.6V18.5Q14.6 18.5 14.6 12.5Q14.6 6.5 20.6 6.5Z" fill="#3c3d3d" stroke="#111616" stroke-width="0.7"/></svg>
<svg class="ic" style="left:1791.0px;top:1085.5px" width="32" height="32" viewBox="0 0 32 32"><path d="M27.9 12.7L22.1 18.5L27.9 24.3Z" fill="#3c3d3d" stroke="#111616" stroke-width="0.5"/><path d="M10 6.5H17.7V10.2H15.8V26.2H13.9V10.2H11.9V26.2H10V18.5Q4 18.5 4 12.5Q4 6.5 10 6.5Z" fill="#3c3d3d" stroke="#111616" stroke-width="0.7"/></svg>
<svg class="ic" style="left:1847.0px;top:1085.5px" width="32" height="32" viewBox="0 0 32 32"><path d="M4.1 5.4H13.9 M1.9 9.4H15.9 M4.1 13.35H13.9 M4.1 17.45H13.9 M18.1 13.3H29.9" stroke="#000" stroke-width="1.8" stroke-linecap="round"/><path d="M3.9 30.3V21.3H14V29.4 M3.9 27.2H14 M18 30.3V21.3H30V29.4 M18 27.2H30" fill="none" stroke="#1a1e1e" stroke-width="1.8"/><path d="M18.6 6.9Q25 6.6 30.4 5.1" fill="none" stroke="#000" stroke-width="1.9" stroke-linecap="round"/><path d="M24.05 6.8V21.2" stroke="#1a1e1e" stroke-width="1.7"/></svg>
<svg class="ic" style="left:1881.1px;top:1100.0px" width="11.6" height="5.8" viewBox="0 0 11.6 5.8"><path d="M0 0H11.6L5.8 5.8Z" fill="#3c3c3c"/></svg>
<div class="grp" style="left:1919px;top:1074px;width:171px;height:55px"></div>
<svg class="ic" style="left:1933.0px;top:1085.5px" width="32" height="32" viewBox="0 0 32 32"><path d="M14.3 9.5H8.9Q3 9.5 3 15.35Q3 21.2 8.9 21.2H14.3 M17.5 9.5H22.9Q28.8 9.5 28.8 15.35Q28.8 21.2 22.9 21.2H17.5" fill="none" stroke="#000" stroke-width="2.1"/><rect x="6.9" y="13.4" width="18" height="4" rx="2" fill="#fff" stroke="#000" stroke-width="1.8"/><path d="M15.9 9.5V13.4 M15.9 17.4V21.2" stroke="#444" stroke-width="1"/></svg>
<svg class="ic" style="left:1989.0px;top:1085.5px" width="32" height="32" viewBox="0 0 32 32"><path d="M14.3 9.5H8.9Q3 9.5 3 15.35Q3 21.2 8.9 21.2H14.3 M17.5 9.5H22.9Q28.8 9.5 28.8 15.35V16.5" fill="none" stroke="#a6a8a8" stroke-width="2.1"/><path d="M8.9 13.4H22.9Q24.9 13.4 24.9 15.4Q24.9 17.4 22.9 17.4H20 M17 17.4H8.9Q6.9 17.4 6.9 15.4Q6.9 13.4 8.9 13.4" fill="none" stroke="#a6a8a8" stroke-width="1.8"/><path d="M18.2 19.6L28.2 29.3 M28.2 19.6L18.2 29.3" stroke="#a6a8a8" stroke-width="2.6"/></svg>
<svg class="ic" style="left:2046.0px;top:1085.5px" width="32" height="32" viewBox="0 0 32 32"><rect x="3.06" y="2.7" width="1.85" height="27.7" rx="0.6" fill="#0d1111"/><path d="M7.1 4.9Q9 2 12.4 2Q15.5 2 18 3.5Q20.6 4.9 23.2 4.9Q26.6 4.9 28.7 2.7V18.05Q26.6 20 23.2 20Q20.6 20 18 18.7Q15.4 17.5 12.4 17.5Q9.2 17.5 7.1 20.2Z" fill="#454646" stroke="#0d1111" stroke-width="0.9"/></svg>
<div class="grp" style="left:704px;top:1140.5px;width:450px;height:55px"></div>
<svg class="ic" style="left:717.0px;top:1152.0px" width="32" height="32" viewBox="0 0 32 32"><rect x="3" y="4.55" width="25.95" height="22" fill="#f2f2f2" stroke="#111616" stroke-width="1.9"/><circle cx="8.9" cy="10.45" r="2.9" fill="#3c3d3d" stroke="#111616" stroke-width="0.5"/><path d="M3.9 25.2L10.2 17.9L15.6 22.1L22.4 13.8L28.2 20.8V26.6H3.9Z" fill="#3c3d3d" stroke="#111616" stroke-width="0.7"/></svg>
<svg class="ic" style="left:773.0px;top:1152.0px" width="32" height="32" viewBox="0 0 32 32"><circle cx="15.9" cy="15.4" r="13.6" fill="#3c3d3d" stroke="#111616" stroke-width="0.8"/><path d="M7.8 23.2Q12.6 24 15.2 18.8L18.6 11.8Q20.4 8.2 24 7.6 M17.2 15.9H22.8" fill="none" stroke="#111" stroke-width="4.2"/><path d="M7.8 23.2Q12.6 24 15.2 18.8L18.6 11.8Q20.4 8.2 24 7.6 M17.2 15.9H22.8" fill="none" stroke="#fafafa" stroke-width="3"/></svg>
<svg class="ic" style="left:829.0px;top:1152.0px" width="32" height="32" viewBox="0 0 32 32"><rect x="1" y="2.5" width="29.9" height="25.8" fill="#f4f4f4" stroke="#111616" stroke-width="2"/><rect x="0" y="1.5" width="31.9" height="7.5" fill="#4e4f4f"/><rect x="0" y="1.5" width="31.9" height="0.9" fill="#000"/><path d="M10.95 9V28.3 M20.95 9V28.3 M1 18.35H30.9" stroke="#111616" stroke-width="2"/></svg>
<svg class="ic" style="left:885.0px;top:1152.0px" width="32" height="32" viewBox="0 0 32 32"><path d="M4.8 0.4H27.2 M4.8 4.35H27.2 M4.8 8.35H27.2 M4.8 22.4H27.2 M4.8 26.35H27.2 M4.8 30.25H27.2" stroke="#000" stroke-width="1.9" stroke-linecap="round"/><rect x="2.5" y="14" width="27" height="3" fill="#484949" stroke="#000" stroke-width="0.8"/></svg>
<svg class="ic" style="left:941.0px;top:1152.0px" width="32" height="32" viewBox="0 0 32 32"><circle cx="15.9" cy="15.4" r="12.95" fill="none" stroke="#0d1111" stroke-width="1.9"/><circle cx="11.1" cy="12.3" r="2.9" fill="#3c3d3d" stroke="#111616" stroke-width="0.5"/><circle cx="20.7" cy="12.3" r="2.9" fill="#3c3d3d" stroke="#111616" stroke-width="0.5"/><path d="M10.4 20.3Q16.1 24.8 21.8 20.3" fill="none" stroke="#0d1111" stroke-width="2"/></svg>
<svg class="ic" style="left:998.0px;top:1152.0px" width="32" height="32" viewBox="0 0 32 32"><path d="M3 29.1V24.6H5.2V25.9H11.8Q3 21 3 14.6Q3 2.8 16.4 2.8Q29.9 2.8 29.9 14.6Q29.9 21 21.1 25.9H27.6V24.6H29.9V29.1H19.4V26Q24.3 21.5 24.3 14.6Q24.3 6.4 16.4 6.4Q8.6 6.4 8.6 14.6Q8.6 21.5 13.4 26V29.1Z" fill="#3c3d3d" stroke="#111616" stroke-width="0.6"/></svg>
<svg class="ic" style="left:1054.0px;top:1152.0px" width="32" height="32" viewBox="0 0 32 32"><path d="M1 9.4L8.7 16.5L1 23.5Z" fill="#3c3d3d" stroke="#111616" stroke-width="0.5"/><rect x="11.6" y="5.9" width="18.9" height="5" fill="#4a4b4b" stroke="#000" stroke-width="0.8"/><rect x="11.6" y="21.9" width="18.9" height="5" fill="#4a4b4b" stroke="#000" stroke-width="0.8"/><path d="M11.6 16.45H16.6 M19.2 16.45H24.5 M27.3 16.45H30.9" stroke="#000" stroke-width="1.8" stroke-linecap="round"/></svg>
<svg class="ic" style="left:1109.0px;top:1152.0px" width="32" height="32" viewBox="0 0 32 32"><circle cx="15.85" cy="15.4" r="12.8" fill="none" stroke="#0d1111" stroke-width="2"/><path d="M7.6 6.9L12.6 5.7L18.7 5.5L17.4 8.2L14.6 12.4L12.8 12.2L12.2 15.4L10.6 14.1L8.6 11.6Z" fill="#3c3d3d" stroke="#111616" stroke-width="0.6"/><path d="M14.2 18.2L21.6 20.3L19.8 24.5L17.6 28L15.2 21.6Z" fill="#3c3d3d" stroke="#111616" stroke-width="0.6"/><circle cx="21.2" cy="7" r="0.6" fill="#222"/></svg>
<div class="grp" style="left:703px;top:1206.5px;width:182px;height:55px"></div>
<div class="t cj" style="left:725px;top:1222px;font-size:24px;color:#333">样式</div>
<svg class="ic" style="left:859.6px;top:1232.2px" width="11.8" height="6" viewBox="0 0 11.8 6"><path d="M0 0H11.8L5.9 6Z" fill="#3c3c3c"/></svg>
<div class="grp" style="left:897px;top:1206.5px;width:182px;height:55px"></div>
<div class="t cj" style="left:919px;top:1222px;font-size:24px;color:#333">格式</div>
<svg class="ic" style="left:1053.6px;top:1232.2px" width="11.8" height="6" viewBox="0 0 11.8 6"><path d="M0 0H11.8L5.9 6Z" fill="#3c3c3c"/></svg>
<div class="grp" style="left:1091px;top:1206.5px;width:182px;height:55px"></div>
<div class="t cj" style="left:1113px;top:1222px;font-size:24px;color:#333">字体</div>
<svg class="ic" style="left:1247.6px;top:1232.2px" width="11.8" height="6" viewBox="0 0 11.8 6"><path d="M0 0H11.8L5.9 6Z" fill="#3c3c3c"/></svg>
<div class="grp" style="left:1286px;top:1206.5px;width:121px;height:55px"></div>
<div class="t cj" style="left:1308px;top:1222px;font-size:24px;color:#333">大小</div>
<svg class="ic" style="left:1381.6px;top:1232.2px" width="11.8" height="6" viewBox="0 0 11.8 6"><path d="M0 0H11.8L5.9 6Z" fill="#3c3c3c"/></svg>
<div class="grp" style="left:1420px;top:1206.5px;width:142px;height:55px"></div>
<svg class="ic" style="left:1434.0px;top:1218.0px" width="32" height="32" viewBox="0 0 32 32"><path fill-rule="evenodd" d="M5.7 23.85L13.8 3.6H18.1L26 23.85H19.8L18.4 19.3H13.2L11.4 23.85Z M13.9 14.9H17.4L15.6 9.6Z" fill="#3c3d3d" stroke="#111616" stroke-width="0.7"/><rect x="1.1" y="27.6" width="29.7" height="1.1" fill="#000"/><rect x="1.1" y="28.7" width="29.7" height="2.45" fill="#8e9090"/></svg>
<svg class="ic" style="left:1467.3px;top:1232.1px" width="11.6" height="5.8" viewBox="0 0 11.6 5.8"><path d="M0 0H11.6L5.8 5.8Z" fill="#3c3c3c"/></svg>
<svg class="ic" style="left:1503.0px;top:1218.0px" width="32" height="32" viewBox="0 0 32 32"><rect x="2.3" y="1.7" width="27.3" height="27.8" rx="4.2" fill="#3c3d3d" stroke="#111616" stroke-width="0.8"/><path fill-rule="evenodd" d="M6.9 24.7L13.4 6.3H18.8L25 24.7H20.5L19.2 20.8H12.8L11.4 24.7Z M13.9 17.1H18.1L16.1 11.3Z" fill="#f6f6f6"/></svg>
<svg class="ic" style="left:1537.2px;top:1232.1px" width="11.6" height="5.8" viewBox="0 0 11.6 5.8"><path d="M0 0H11.6L5.8 5.8Z" fill="#3c3c3c"/></svg>
<div class="grp" style="left:1575px;top:1206.5px;width:115px;height:55px"></div>
<svg class="ic" style="left:1589.0px;top:1218.0px" width="32" height="32" viewBox="0 0 32 32"><path d="M2.0 1.5 L12.0 1.5 L8.9 5.3 L13.9 9.2 L13.9 13.4 L9.7 13.4 L4.9 9.4 L2.0 11.3Z" fill="#3a3b3b"/><path d="M2.0 29.1 L12.0 29.1 L8.9 25.3 L13.9 21.4 L13.9 17.2 L9.7 17.2 L4.9 21.2 L2.0 19.3Z" fill="#3a3b3b"/><path d="M29.8 1.5 L19.8 1.5 L22.9 5.3 L17.9 9.2 L17.9 13.4 L22.1 13.4 L26.9 9.4 L29.8 11.3Z" fill="#3a3b3b"/><path d="M29.8 29.1 L19.8 29.1 L22.9 25.3 L17.9 21.4 L17.9 17.2 L22.1 17.2 L26.9 21.2 L29.8 19.3Z" fill="#3a3b3b"/></svg>
<svg class="ic" style="left:1645.0px;top:1218.0px" width="32" height="32" viewBox="0 0 32 32"><rect x="2.0" y="1.4" width="2.2" height="2.2" fill="#111"/><rect x="17.9" y="13.4" width="2.2" height="2.2" fill="#111"/><rect x="2.0" y="13.4" width="2.2" height="2.2" fill="#111"/><rect x="2.0" y="9.4" width="2.2" height="2.2" fill="#111"/><rect x="17.9" y="9.4" width="2.2" height="2.2" fill="#111"/><rect x="17.9" y="5.4" width="2.2" height="2.2" fill="#111"/><rect x="9.9" y="17.2" width="2.2" height="2.2" fill="#111"/><rect x="9.9" y="1.4" width="2.2" height="2.2" fill="#111"/><rect x="5.9" y="17.2" width="2.2" height="2.2" fill="#111"/><rect x="5.9" y="1.4" width="2.2" height="2.2" fill="#111"/><rect x="17.9" y="17.2" width="2.2" height="2.2" fill="#111"/><rect x="2.0" y="17.2" width="2.2" height="2.2" fill="#111"/><rect x="17.9" y="1.4" width="2.2" height="2.2" fill="#111"/><rect x="2.0" y="5.4" width="2.2" height="2.2" fill="#111"/><rect x="13.9" y="17.2" width="2.2" height="2.2" fill="#111"/><rect x="13.9" y="1.4" width="2.2" height="2.2" fill="#111"/><rect x="3.1" y="22.7" width="15.4" height="5.4" rx="2.7" fill="none" stroke="#111" stroke-width="2"/><rect x="23" y="2.5" width="5.9" height="25.6" rx="2.95" fill="none" stroke="#111" stroke-width="2"/></svg>
<div class="grp" style="left:1703px;top:1206.5px;width:59px;height:55px"></div>
<svg class="ic" style="left:1717.0px;top:1218.0px" width="32" height="32" viewBox="0 0 32 32"><path d="M9.9 10.6Q9.9 4 16.5 4Q23.6 4 23.6 9.8Q23.6 13.6 19.6 15.3Q16.6 16.6 16.6 21.3" fill="none" stroke="#3c3d3d" stroke-width="4.6"/><circle cx="16.5" cy="26.5" r="3.3" fill="#3c3d3d" stroke="#111616" stroke-width="0.5"/></svg>
<div class="t cj" style="left:728px;top:1326px;font-size:26px;color:#222">在此添加内容</div>
</body></html>
